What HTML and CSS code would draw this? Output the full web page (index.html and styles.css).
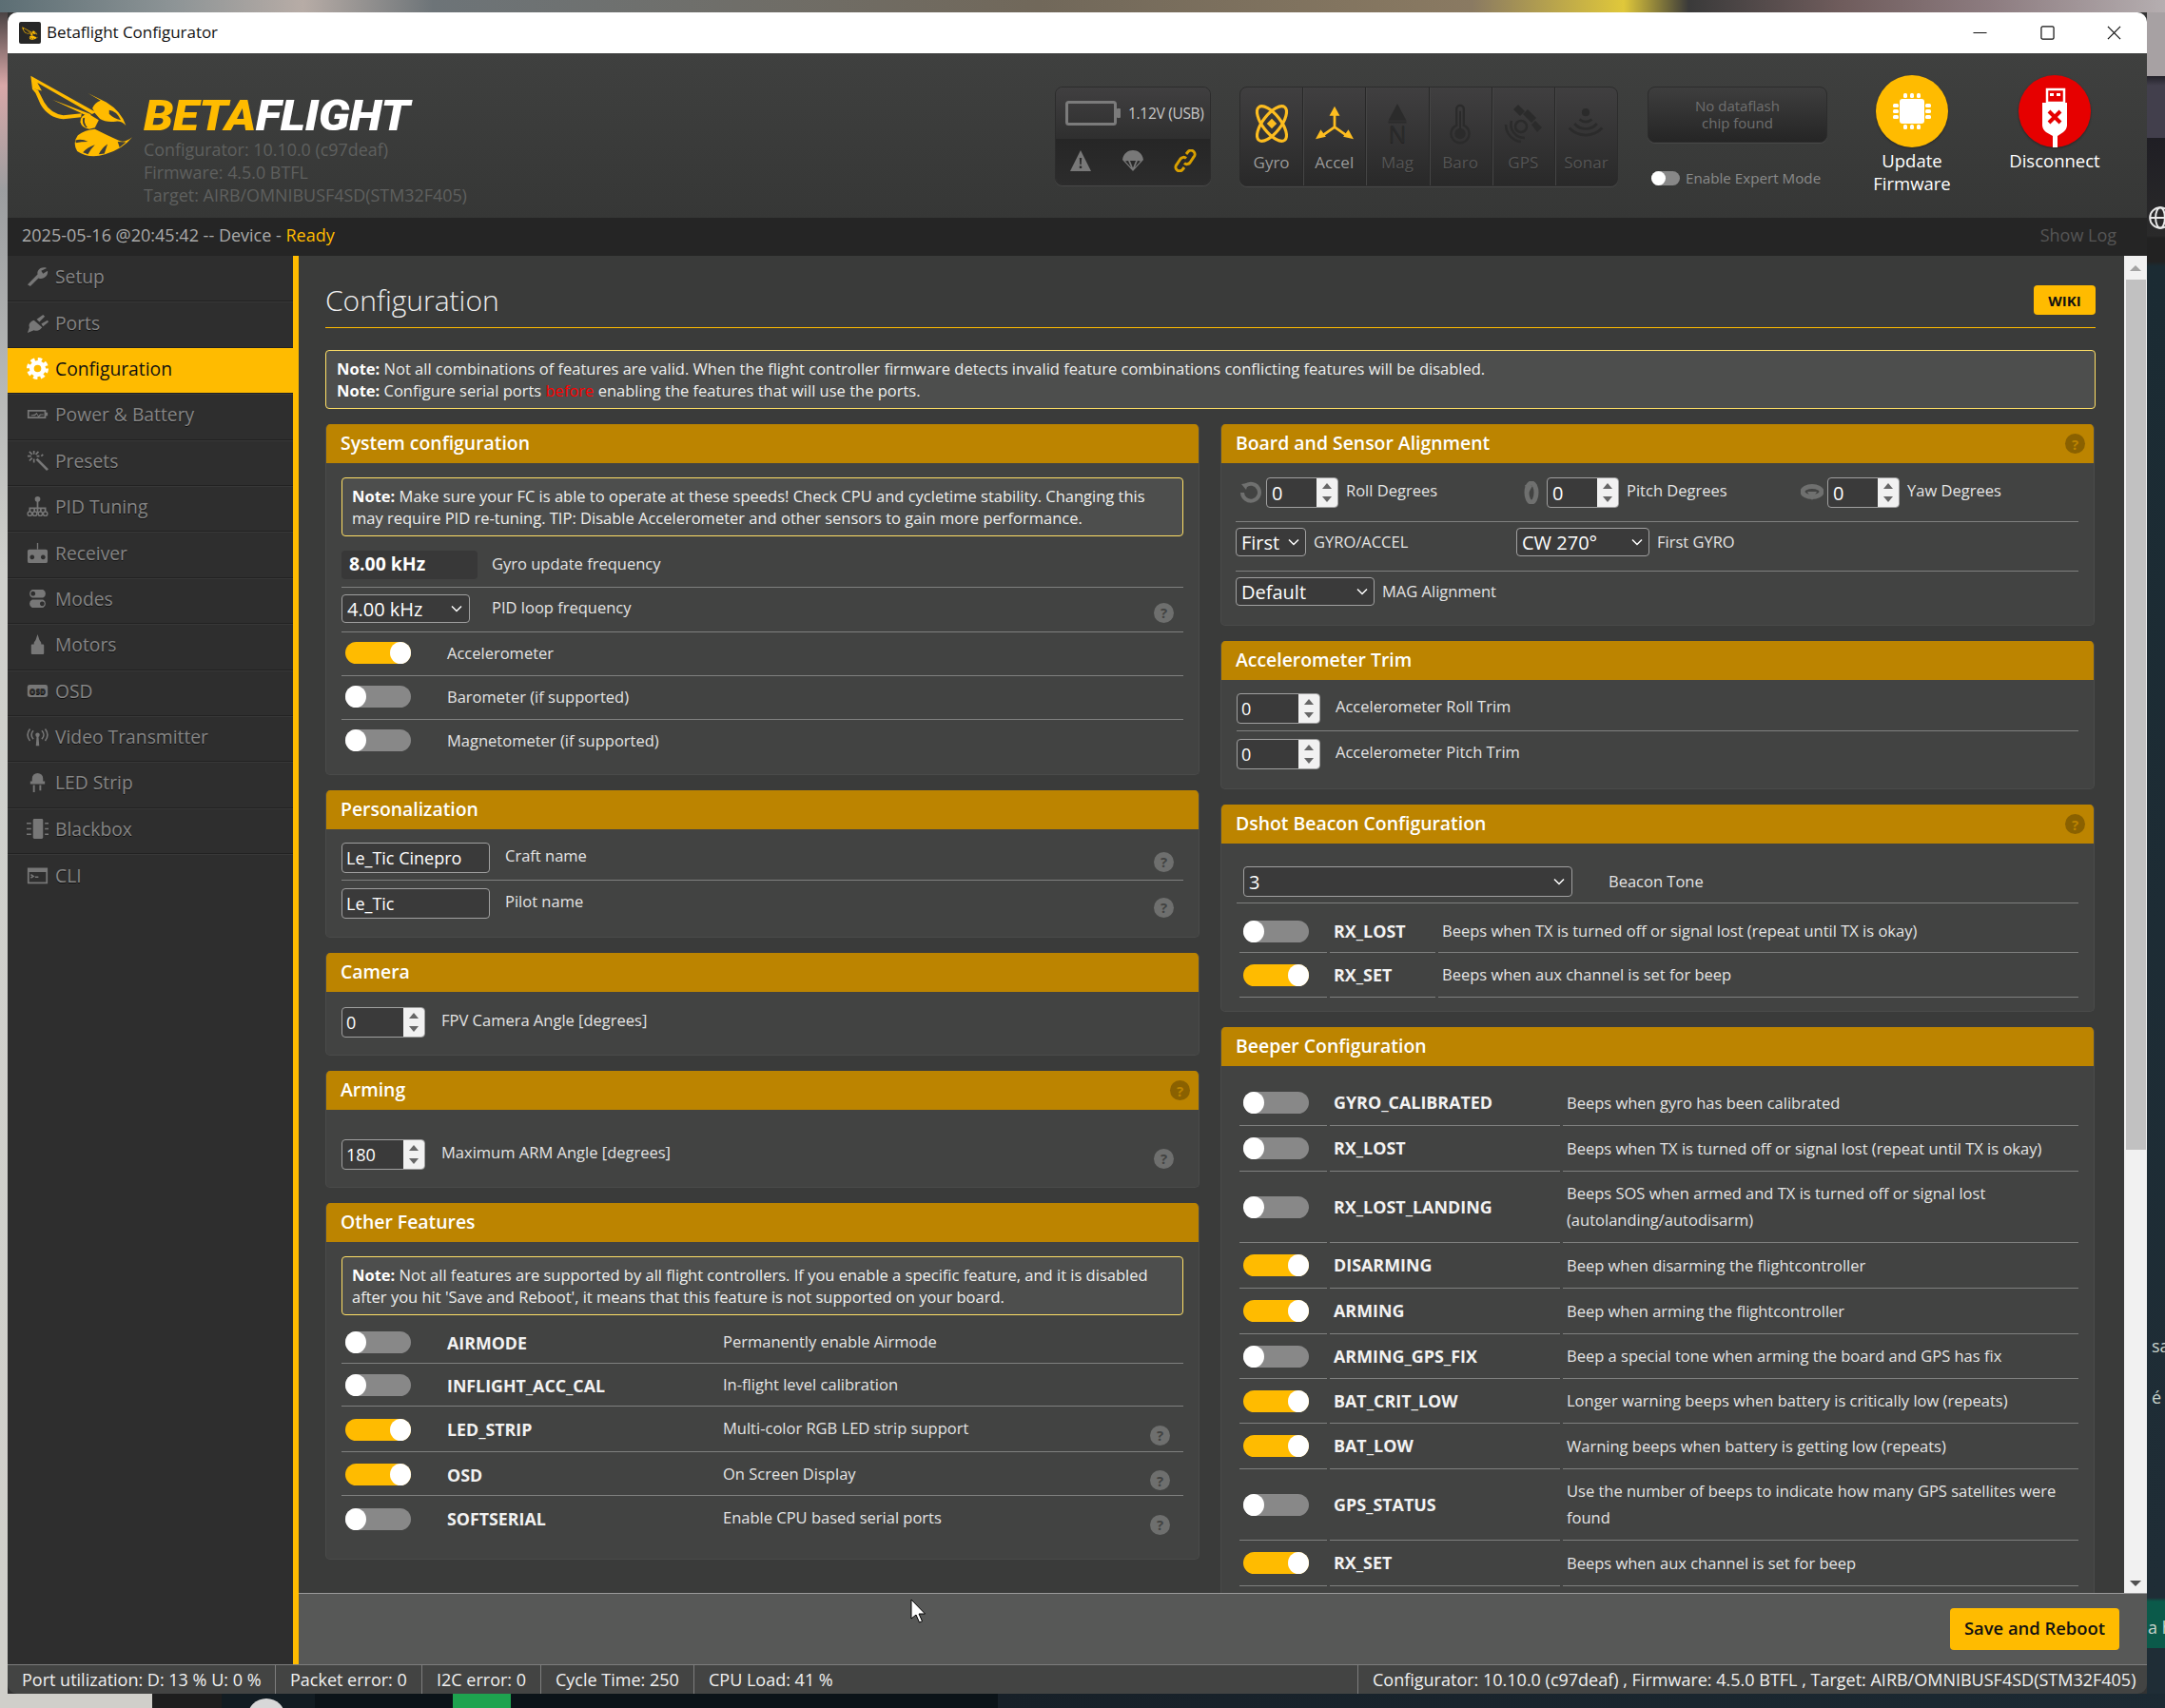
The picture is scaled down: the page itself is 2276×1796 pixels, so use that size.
FILE: index.html
```html
<!DOCTYPE html>
<html lang="en">
<head>
<meta charset="utf-8">
<title>Betaflight Configurator</title>
<link rel="stylesheet" href="styles.css">
</head>
<body>
<svg class="defs" width="0" height="0" aria-hidden="true">
  <symbol id="bee" viewBox="90 80 340 270">
    <path fill="#ffbb00" d="M97 88 L303 203 L291 209 L118 110 L132 135 L103 128 L120 133 L140 172 Q160 206 200 213 L258 207 L256 219 L200 225 Q152 220 128 178 L112 142 L102 130 Z"/>
    <path fill="#ffbb00" d="M165 163 L288 210 L278 216 Z"/>
    <path fill="#ffbb00" d="M278 143 L336 171 Q384 200 398 245 Q384 230 366 232 Q335 236 316 224 L300 206 L292 190 Q300 172 318 166 Z"/>
    <path fill="#3c3d3c" d="M345 196 Q368 198 382 228 Q358 222 345 208 Z"/>
    <path fill="#ffbb00" d="M280 208 Q252 212 254 234 Q258 254 282 256 L300 252 L312 228 Z"/>
    <path fill="#3c3d3c" d="M262 222 Q258 240 272 252 L276 250 Q264 238 268 220 Z"/>
    <path fill="#ffbb00" d="M300 256 Q268 258 246 276 Q228 300 244 326 Q282 352 332 336 Q388 320 418 282 Q392 302 374 292 Q340 276 300 256 Z"/>
    <path fill="#3c3d3c" d="M238 292 Q258 286 278 296 Q256 296 240 300 Z M262 330 Q276 314 300 306 Q286 320 278 336 Z M312 336 Q322 316 340 304 Q334 322 330 334 Z M372 296 L398 298 L378 314 Z"/>
  </symbol>
</svg>

<span class="bgtext bg-sa">sa</span>
<span class="bgtext bg-e">é</span>
<span class="bgtext bg-ah">a h</span>
<span class="bg-circle"></span>
<span class="bg-green"></span>
<svg class="globe" viewBox="0 0 24 24"><circle cx="12" cy="12" r="10"/><ellipse cx="12" cy="12" rx="4.5" ry="10"/><path d="M2 12h20"/></svg>

<div class="window">
  <div class="titlebar">
    <span class="appicon"><svg width="18" height="16"><use href="#bee"/></svg></span>
    <span class="apptitle">Betaflight Configurator</span>
    <div class="winbtns">
      <svg class="winbtn" viewBox="0 0 16 16"><path d="M0.5 8h15"/></svg>
      <svg class="winbtn" viewBox="0 0 16 16"><rect x="1" y="1" width="14" height="14" rx="1.5"/></svg>
      <svg class="winbtn" viewBox="0 0 16 16"><path d="M1 1l14 14M15 1L1 15"/></svg>
    </div>
  </div>

  <header class="header">
    <svg class="beelogo"><use href="#bee"/></svg>
    <div class="brand">
      <div class="wordmark"><span class="w-y">BETA</span><span class="w-w">FLIGHT</span></div>
      <div class="ver">Configurator: 10.10.0 (c97deaf)</div>
      <div class="ver">Firmware: 4.5.0 BTFL</div>
      <div class="ver">Target: AIRB/OMNIBUSF4SD(STM32F405)</div>
    </div>
    <div class="cluster">
      <div class="batbox">
        <div class="bat-top">
          <svg class="baticon" viewBox="0 0 58 26"><rect x="1.5" y="1.5" width="51" height="23" rx="2"/><rect class="nub" x="54" y="8" width="4" height="10" rx="1"/></svg>
          <span class="battxt">1.12V (USB)</span>
        </div>
        <div class="bat-bot">
          <svg class="staticon" viewBox="0 0 24 24"><path d="M12 1l11 22H1z"/><path class="cut" d="M10.8 9h2.4l-.5 7h-1.4zM10.8 17.5h2.4v2.4h-2.4z"/></svg>
          <svg class="staticon" viewBox="0 0 24 24"><path d="M1 11C2 4 7 1 12 1s10 3 11 10l-11 12zM4 12.500l6 6.500-3-7zM9 12l3 7.500 3-7.500zM17 12l-3 7 6-6.500z" fill-rule="evenodd"/></svg>
          <svg class="staticon link" viewBox="0 0 24 24"><path d="M13 5l2-2.500a4 4 0 0 1 6 5.500l-4 6a4 4 0 0 1-6 .5M11 19l-2 2.500a4 4 0 0 1-6-5.500l4-6a4 4 0 0 1 6-.5"/></svg>
        </div>
      </div>

      <div class="sensors">
        <div class="sensor lit">
          <svg class="sicon" viewBox="0 0 36 40"><g fill="none" stroke="#fdbd20" stroke-width="3"><ellipse cx="18" cy="20" rx="9" ry="21" transform="rotate(-38 18 20)"/><ellipse cx="18" cy="20" rx="9" ry="21" transform="rotate(38 18 20)"/></g><path fill="#fdbd20" d="M18 15l5 5-5 5-5-5z"/></svg>
          <span>Gyro</span>
        </div>
        <div class="sensor lit">
          <svg class="sicon" viewBox="0 0 44 40"><g fill="none" stroke="#fdbd20" stroke-width="3"><path d="M22 8v16M22 24L9 33M22 24l13 9"/></g><path fill="#fdbd20" d="M22 0l6 11H16zM0 38l6-11 6 8zM44 38l-6-11-6 8z"/></svg>
          <span>Accel</span>
        </div>
        <div class="sensor">
          <svg class="sicon" viewBox="0 0 36 40"><path class="dark" d="M18 0l9 17H9z"/><path class="darkline" d="M9 18.500h18"/><text class="ntext" x="18" y="39" text-anchor="middle">N</text></svg>
          <span>Mag</span>
        </div>
        <div class="sensor">
          <svg class="sicon" viewBox="0 0 36 44"><path class="therm" d="M14 24V6a4 4 0 0 1 8 0v18a10 10 0 1 1-8 0z"/><circle class="dark" cx="18" cy="33" r="6"/><path class="darkline" d="M18 8v20"/></svg>
          <span>Baro</span>
        </div>
        <div class="sensor">
          <svg class="sicon" viewBox="0 0 40 42"><path class="dark" d="M10 6l5-5 7 7-5 5zM20 11l5-5 9 9-5 5zM29 22l4-4 7 7-5 5z"/><circle class="therm" cx="18" cy="24" r="6"/><path class="therm" d="M8 18a14 14 0 0 0 14 18M2 22a18 18 0 0 0 16 18"/></svg>
          <span>GPS</span>
        </div>
        <div class="sensor">
          <svg class="sicon" viewBox="0 0 44 40"><circle class="dark" cx="22" cy="7" r="4.500"/><path class="thick" d="M15 15a10 10 0 0 0 14 0M9 20a17 17 0 0 0 26 0M3 25a26 26 0 0 0 38 0"/></svg>
          <span>Sonar</span>
        </div>
      </div>

      <div class="flashcol">
        <div class="flashbox">No dataflash<br>chip found</div>
        <div class="expert"><span class="mini"></span><span>Enable Expert Mode</span></div>
      </div>

      <div class="bigbtn">
        <svg class="circle" viewBox="0 0 76 76"><circle cx="38" cy="38" r="38" fill="#ffbb00"/><rect x="25" y="25" width="26" height="26" rx="3" fill="#fff"/><g fill="#fff"><rect x="29" y="19" width="4" height="5" rx="1.500"/><rect x="36" y="19" width="4" height="5" rx="1.500"/><rect x="43" y="19" width="4" height="5" rx="1.500"/><rect x="29" y="52" width="4" height="5" rx="1.500"/><rect x="36" y="52" width="4" height="5" rx="1.500"/><rect x="43" y="52" width="4" height="5" rx="1.500"/><rect x="18" y="30" width="6" height="4" rx="1.500"/><rect x="18" y="36" width="6" height="4" rx="1.500"/><rect x="18" y="42" width="6" height="4" rx="1.500"/><rect x="52" y="30" width="6" height="4" rx="1.500"/><rect x="52" y="36" width="6" height="4" rx="1.500"/><rect x="52" y="42" width="6" height="4" rx="1.500"/></g></svg>
        <span>Update<br>Firmware</span>
      </div>
      <div class="bigbtn second">
        <svg class="circle" viewBox="0 0 76 76"><circle cx="38" cy="38" r="38" fill="#e60000"/><rect x="30" y="15" width="18" height="14" fill="none" stroke="#fff" stroke-width="2.500"/><rect x="33" y="19" width="4" height="3" fill="#fff"/><rect x="40" y="19" width="4" height="3" fill="#fff"/><path fill="#fff" d="M25 29h26v24a10 10 0 0 1-4 7l-6 4v12h-5V64l-7-4a10 10 0 0 1-4-7z"/><path d="M32 38l12 12M44 38L32 50" stroke="#e60000" stroke-width="4"/></svg>
        <span>Disconnect</span>
      </div>
    </div>
  </header>

  <div class="logline">
    <div>2025-05-16 @20:45:42 -- Device - <span class="ready">Ready</span></div>
    <div class="showlog">Show Log</div>
  </div>

  <div class="main">
    <nav class="side">
      <a class="nav"><svg viewBox="0 0 24 24"><path d="M1 21L12 10C11 5 16 1 22 3l-6 3 2 3 5-3c1 6-5 10-10 8L4 23z"/></svg>Setup</a>
      <a class="nav"><svg viewBox="0 0 24 24"><path d="M1 23l2-6c-1-3 0-5 3-7l2-1 9 8-2 2c-3 2-5 2-7 1zM11 8l7-5 2 2-6 6zM16 13l7-4 1 2-6 5z"/></svg>Ports</a>
      <a class="nav active"><svg viewBox="0 0 24 24"><circle class="gr" cx="12" cy="12" r="6.500"/><circle class="gt" cx="12" cy="12" r="10"/></svg>Configuration</a>
      <a class="nav"><svg viewBox="0 0 26 24"><path d="M1 7h22v3h2v4h-2v3H1zM3 9v6h18V9z" fill-rule="evenodd"/><path d="M5 13l5-1 2-2 2 4 2-2h4v1h-3l-3 3-2-4-2 2H5z"/></svg>Power &amp; Battery</a>
      <a class="nav"><svg viewBox="0 0 24 24"><path d="M10 11l2-2 12 12-2 2z"/><path class="ln" d="M8 1v4M8 10v4M1 7h4M11 7h3M3 2l3 3M3 12l3-3M13 2l-3 3M18 5l-2 2"/></svg>Presets</a>
      <a class="nav"><svg viewBox="0 0 24 24"><circle cx="12" cy="4" r="3"/><path class="ln" d="M12 6v13M3.500 19v-5h17v5M8.500 14v5M15.500 14v5"/><circle class="hole" cx="3.500" cy="20" r="2.300"/><circle class="hole" cx="9" cy="20" r="2.300"/><circle class="hole" cx="15" cy="20" r="2.300"/><circle class="hole" cx="20.500" cy="20" r="2.300"/></svg>PID Tuning</a>
      <a class="nav"><svg viewBox="0 0 24 24"><path d="M11.300 1h1.400v7h-1.400z"/><path fill-rule="evenodd" d="M3 8h18a2 2 0 0 1 2 2v11a2 2 0 0 1-2 2H3a2 2 0 0 1-2-2V10a2 2 0 0 1 2-2zm3 6a2.500 2.500 0 1 0 .1 0zm12 0a2.500 2.500 0 1 0 .1 0z"/></svg>Receiver</a>
      <a class="nav"><svg viewBox="0 0 24 24"><path fill-rule="evenodd" d="M6 2h12a5 5 0 0 1 0 9H6a5 5 0 0 1 0-9zm1 2a2.500 2.500 0 1 0 .1 0zM6 13h12a5 5 0 0 1 0 9H6a5 5 0 0 1 0-9zm11 2a2.500 2.500 0 1 0 .1 0z"/></svg>Modes</a>
      <a class="nav"><svg viewBox="0 0 24 24"><path d="M12 1l2 6c1 2 2 2 2 4v1h2a1 1 0 0 1 1 1v9a1 1 0 0 1-1 1H6a1 1 0 0 1-1-1v-9a1 1 0 0 1 1-1h2v-1c0-2 1-2 2-4z"/></svg>Motors</a>
      <a class="nav"><svg class="wide" viewBox="0 0 28 18"><rect x="1" y="1" width="26" height="16" rx="3"/><text class="osdtxt" x="14" y="13" text-anchor="middle">OSD</text></svg>OSD</a>
      <a class="nav"><svg viewBox="0 0 26 24"><circle cx="13" cy="10" r="2.500"/><path d="M12 11h2l1 12h-4z"/><path class="ln" d="M8 5c-3 3-3 7 0 10M18 5c3 3 3 7 0 10M4 3c-4 5-4 9 0 14M22 3c4 5 4 9 0 14"/></svg>Video Transmitter</a>
      <a class="nav"><svg viewBox="0 0 24 24"><path d="M6 11V8a6 6 0 0 1 12 0v3h2v3H4v-3zM7 15h2v8H7zM14 15h2v6h-2z"/></svg>LED Strip</a>
      <a class="nav"><svg viewBox="0 0 24 24"><rect x="7" y="1" width="11" height="22" rx="1.500"/><path class="ln" d="M0 6h5M0 12h5M0 18h5M20 6h4M20 12h4M20 18h4"/></svg>Blackbox</a>
      <a class="nav"><svg class="wide" viewBox="0 0 26 22"><path fill-rule="evenodd" d="M1 2h24v19H1zm2 5v12h20V7z"/><path class="ln" d="M5 10l3 2-3 2M10 13h4"/></svg>CLI</a>
    </nav>

    <div class="content">
      <div class="scrollarea">
        <div class="scroller">
          <div class="titlewrap">
            <h1>Configuration</h1>
            <a class="wiki">WIKI</a>
          </div>
          <div class="note topnote"><b>Note:</b> Not all combinations of features are valid. When the flight controller firmware detects invalid feature combinations conflicting features will be disabled.<br><b>Note:</b> Configure serial ports <span class="red">before</span> enabling the features that will use the ports.</div>

          <div class="cols">
            <div class="col">
              <section class="panel">
                <div class="phead">System configuration</div>
                <div class="pbody body-sys">
                  <div class="note pnote"><b>Note:</b> Make sure your FC is able to operate at these speeds! Check CPU and cycletime stability. Changing this may require PID re-tuning. TIP: Disable Accelerometer and other sensors to gain more performance.</div>
                  <div class="row r-gyro"><div class="readout">8.00 kHz</div><span class="label lab-up">Gyro update frequency</span></div>
                  <div class="row r-pid">
                    <div class="selwrap sw-pid"><select class="sel"><option>4.00 kHz</option></select><svg class="chev" viewBox="0 0 12 8"><path d="M1 1.500l5 5 5-5"/></svg></div>
                    <span class="label lab-up">PID loop frequency</span><span class="help helplow">?</span>
                  </div>
                  <div class="row r-tog"><span class="toggle on"></span><span class="label lab-tog">Accelerometer</span></div>
                  <div class="row r-tog"><span class="toggle"></span><span class="label lab-tog">Barometer (if supported)</span></div>
                  <div class="row r-tog last"><span class="toggle"></span><span class="label lab-tog">Magnetometer (if supported)</span></div>
                </div>
              </section>

              <section class="panel">
                <div class="phead">Personalization</div>
                <div class="pbody body-pers">
                  <div class="row r-inp"><input class="text" value="Le_Tic Cinepro" readonly><span class="label lab-name">Craft name</span><span class="help helplow">?</span></div>
                  <div class="row r-inp last"><input class="text" value="Le_Tic" readonly><span class="label lab-name">Pilot name</span><span class="help helplow">?</span></div>
                </div>
              </section>

              <section class="panel">
                <div class="phead">Camera</div>
                <div class="pbody body-cam">
                  <div class="row last"><div class="num"><input value="0" readonly><span class="spin"><i></i><i class="dn"></i></span></div><span class="label lab-num">FPV Camera Angle [degrees]</span></div>
                </div>
              </section>

              <section class="panel">
                <div class="phead">Arming<span class="help hhelp">?</span></div>
                <div class="pbody body-arm">
                  <div class="row last"><div class="num"><input value="180" readonly><span class="spin"><i></i><i class="dn"></i></span></div><span class="label lab-num">Maximum ARM Angle [degrees]</span><span class="help helplow">?</span></div>
                </div>
              </section>

              <section class="panel">
                <div class="phead">Other Features</div>
                <div class="pbody body-other">
                  <div class="note pnote"><b>Note:</b> Not all features are supported by all flight controllers. If you enable a specific feature, and it is disabled after you hit 'Save and Reboot', it means that this feature is not supported on your board.</div>
                  <div class="row f1"><span class="toggle"></span><b class="fname">AIRMODE</b><span class="fdesc">Permanently enable Airmode</span></div>
                  <div class="row f2"><span class="toggle"></span><b class="fname">INFLIGHT_ACC_CAL</b><span class="fdesc">In-flight level calibration</span></div>
                  <div class="row f3"><span class="toggle on"></span><b class="fname">LED_STRIP</b><span class="fdesc">Multi-color RGB LED strip support</span><span class="help helpf">?</span></div>
                  <div class="row f4"><span class="toggle on"></span><b class="fname">OSD</b><span class="fdesc">On Screen Display</span><span class="help helpf">?</span></div>
                  <div class="row f5 last"><span class="toggle"></span><b class="fname">SOFTSERIAL</b><span class="fdesc">Enable CPU based serial ports</span><span class="help helpf">?</span></div>
                </div>
              </section>
            </div>

            <div class="col">
              <section class="panel">
                <div class="phead">Board and Sensor Alignment<span class="help hhelp">?</span></div>
                <div class="pbody body-board">
                  <div class="trio t-deg">
                    <div class="cell">
                      <svg class="axis" viewBox="0 0 24 24"><path class="arc" d="M6 5a9 9 0 1 1-3 7"/><path class="arrow" d="M2 3l7-1-2 7z"/></svg>
                      <div class="num numb"><input value="0" readonly><span class="spin"><i></i><i class="dn"></i></span></div><span class="label">Roll Degrees</span>
                    </div>
                    <div class="cell">
                      <svg class="axis" viewBox="0 0 24 24"><ellipse class="arc arc-p" cx="12" cy="12" rx="5" ry="10"/><path class="arrow" d="M5 4l8 1-5 9z"/></svg>
                      <div class="num numb"><input value="0" readonly><span class="spin"><i></i><i class="dn"></i></span></div><span class="label">Pitch Degrees</span>
                    </div>
                    <div class="cell">
                      <svg class="axis" viewBox="0 0 24 24"><ellipse class="arc arc-p" cx="12" cy="11" rx="10" ry="5.500"/><path class="arrow" d="M7 11h10l-5 9z"/></svg>
                      <div class="num numb"><input value="0" readonly><span class="spin"><i></i><i class="dn"></i></span></div><span class="label">Yaw Degrees</span>
                    </div>
                  </div>
                  <div class="trio t-sel">
                    <div class="cell">
                      <div class="selwrap sw-first"><select class="sel"><option>First</option></select><svg class="chev" viewBox="0 0 12 8"><path d="M1 1.500l5 5 5-5"/></svg></div>
                      <span class="label">GYRO/ACCEL</span>
                    </div>
                    <div class="cell">
                      <div class="selwrap sw-cw"><select class="sel"><option>CW 270°</option></select><svg class="chev" viewBox="0 0 12 8"><path d="M1 1.500l5 5 5-5"/></svg></div>
                      <span class="label">First GYRO</span>
                    </div>
                  </div>
                  <div class="trio t-mag last">
                    <div class="cell">
                      <div class="selwrap sw-def"><select class="sel"><option>Default</option></select><svg class="chev" viewBox="0 0 12 8"><path d="M1 1.500l5 5 5-5"/></svg></div>
                      <span class="label">MAG Alignment</span>
                    </div>
                  </div>
                </div>
              </section>

              <section class="panel">
                <div class="phead">Accelerometer Trim</div>
                <div class="pbody body-trim">
                  <div class="row r-inp"><div class="num"><input value="0" readonly><span class="spin"><i></i><i class="dn"></i></span></div><span class="label lab-trim">Accelerometer Roll Trim</span></div>
                  <div class="row r-inp last"><div class="num"><input value="0" readonly><span class="spin"><i></i><i class="dn"></i></span></div><span class="label lab-trim">Accelerometer Pitch Trim</span></div>
                </div>
              </section>

              <section class="panel">
                <div class="phead">Dshot Beacon Configuration<span class="help hhelp">?</span></div>
                <div class="pbody body-dshot">
                  <div class="row r-beacon">
                    <div class="selwrap sw-beacon"><select class="sel"><option>3</option></select><svg class="chev" viewBox="0 0 12 8"><path d="M1 1.500l5 5 5-5"/></svg></div>
                    <span class="label lab-beacon">Beacon Tone</span>
                  </div>
                  <table class="tbl dtbl">
                    <tr class="dr1"><td class="tc"><span class="toggle"></span></td><td class="nc"><b>RX_LOST</b></td><td>Beeps when TX is turned off or signal lost (repeat until TX is okay)</td></tr>
                    <tr class="dr2"><td class="tc"><span class="toggle on"></span></td><td class="nc"><b>RX_SET</b></td><td>Beeps when aux channel is set for beep</td></tr>
                  </table>
                </div>
              </section>

              <section class="panel">
                <div class="phead">Beeper Configuration</div>
                <div class="pbody body-beep">
                  <table class="tbl btbl">
                    <tr class="h48"><td class="tc"><span class="toggle"></span></td><td class="nc"><b>GYRO_CALIBRATED</b></td><td>Beeps when gyro has been calibrated</td></tr>
                    <tr class="h48"><td class="tc"><span class="toggle"></span></td><td class="nc"><b>RX_LOST</b></td><td>Beeps when TX is turned off or signal lost (repeat until TX is okay)</td></tr>
                    <tr class="h75"><td class="tc"><span class="toggle"></span></td><td class="nc"><b>RX_LOST_LANDING</b></td><td>Beeps SOS when armed and TX is turned off or signal lost (autolanding/autodisarm)</td></tr>
                    <tr class="h48"><td class="tc"><span class="toggle on"></span></td><td class="nc"><b>DISARMING</b></td><td>Beep when disarming the flightcontroller</td></tr>
                    <tr class="h48"><td class="tc"><span class="toggle on"></span></td><td class="nc"><b>ARMING</b></td><td>Beep when arming the flightcontroller</td></tr>
                    <tr class="h47"><td class="tc"><span class="toggle"></span></td><td class="nc"><b>ARMING_GPS_FIX</b></td><td>Beep a special tone when arming the board and GPS has fix</td></tr>
                    <tr class="h47"><td class="tc"><span class="toggle on"></span></td><td class="nc"><b>BAT_CRIT_LOW</b></td><td>Longer warning beeps when battery is critically low (repeats)</td></tr>
                    <tr class="h48"><td class="tc"><span class="toggle on"></span></td><td class="nc"><b>BAT_LOW</b></td><td>Warning beeps when battery is getting low (repeats)</td></tr>
                    <tr class="h75"><td class="tc"><span class="toggle"></span></td><td class="nc"><b>GPS_STATUS</b></td><td>Use the number of beeps to indicate how many GPS satellites were found</td></tr>
                    <tr class="h48"><td class="tc"><span class="toggle on"></span></td><td class="nc"><b>RX_SET</b></td><td>Beeps when aux channel is set for beep</td></tr>
                  </table>
                </div>
              </section>
            </div>
          </div>
        </div>
        <div class="scrollbar">
          <span class="sb-up"></span>
          <span class="sb-thumb"></span>
          <span class="sb-dn"></span>
        </div>
      </div>
      <div class="footer"><a class="save">Save and Reboot</a></div>
    </div>
  </div>

  <div class="statusbar">
    <span class="st st1">Port utilization: D: 13 % U: 0 %</span>
    <span class="st st2">Packet error: 0</span>
    <span class="st st3">I2C error: 0</span>
    <span class="st st4">Cycle Time: 250</span>
    <span class="st st5">CPU Load: 41 %</span>
    <span class="st st6">Configurator: 10.10.0 (c97deaf) , Firmware: 4.5.0 BTFL , Target: AIRB/OMNIBUSF4SD(STM32F405)</span>
  </div>
</div>

<svg class="cursor" viewBox="0 0 18 26"><path d="M1 1v20l5-4 3.500 8 3-1.300L9 16h6.500z" fill="#fff" stroke="#000"/></svg>
</body>
</html>
```

FILE: styles.css
```css
* { box-sizing: border-box; }
html, body { margin: 0; height: 100%; }
body {
  width: 2276px;
  height: 1796px;
  overflow: hidden;
  position: relative;
  font-family: "Open Sans", sans-serif;
  font-size: 16.500px;
  color: #e4e4e4;
  background:
    linear-gradient(90deg, #5c6e74 0, #8d9496 8%, #b7aca6 14%, #6d7478 20%, #71685a 48%, #8a7a62 68%, #e0c83a 75%, #3a3a3a 78%, #6f5c5c 85%, #8d7c80 92%, #b5aeb0 100%) top / 100% 13px no-repeat,
    linear-gradient(90deg, #d0cfca 0, #d0cfca 160px, #1e1e1e 160px, #1e1e1e 233px, #121c22 233px, #121c22 331px, #0b1318 331px, #0b1318 1049px, #172028 1049px, #1c2a33 100%) bottom / 100% 15px no-repeat,
    linear-gradient(180deg, #a7a1a3 0, #a7a1a3 80px, #222129 80px, #423f4c 90px, #423f4c 145px, #1f1e24 145px, #2a2a2a 248px, #222 250px, #222 275px, #1b2b33 280px, #1f2d36 1680px, #0b5a4a 1684px, #0b5a4a 1733px, #1f2d36 1733px) right / 19px 100% no-repeat,
    linear-gradient(180deg, #333 0, #d9a8a8 90px, #9c9ea0 200px, #cfd0cc 600px, #d0cfca 100%) left / 8px 100% no-repeat,
    #333;
}
.defs { position: absolute; }
.bgtext { position: absolute; left: 2262px; font-size: 18px; color: #c9d3cc; line-height: 20px; white-space: nowrap; }
.bg-sa { top: 1405px; }
.bg-e { top: 1459px; }
.bg-ah { top: 1701px; left: 2258px; }
.bg-circle { position: absolute; left: 260px; top: 1786px; width: 40px; height: 40px; border-radius: 50%; background: #d8d8d8; }
.bg-green { position: absolute; left: 476px; top: 1781px; width: 61px; height: 15px; background: #1ea34f; }
.globe { position: absolute; left: 2258px; top: 216px; width: 26px; height: 26px; fill: none; stroke: #e9e9e9; stroke-width: 1.800; }
.cursor { position: absolute; left: 957px; top: 1681px; width: 18px; height: 26px; }

.window {
  position: absolute;
  left: 8px;
  top: 13px;
  width: 2249px;
  height: 1768px;
  display: flex;
  flex-direction: column;
  border-radius: 10px;
  overflow: hidden;
  background: #3a3b3a;
}

/* title bar */
.titlebar { height: 43px; flex: none; background: #fff; display: flex; align-items: center; padding-left: 12px; color: #111; }
.appicon { width: 23px; height: 23px; background: #272727; border-radius: 2px; display: flex; align-items: center; justify-content: center; }
.apptitle { margin: 0 0 2px 6px; font-size: 17px; letter-spacing: -0.05px; }
.winbtns { margin-left: auto; display: flex; gap: 55.500px; padding-right: 27px; }
.winbtn { width: 15px; height: 15px; fill: none; stroke: #111; stroke-width: 1.300; }

/* header */
.header { height: 173px; flex: none; display: flex; align-items: flex-start; background: linear-gradient(#3f403f, #363736); position: relative; }
.beelogo { width: 113px; height: 90px; margin: 21px 0 0 22px; flex: none; }
.brand { margin: 43px 0 0 8px; }
.wordmark { font-family: Roboto, "Liberation Sans", sans-serif; font-weight: 900; font-style: italic; font-size: 44px; line-height: 46px; letter-spacing: -0.5px; height: 46px; width: 246px; transform: scaleX(1.14); transform-origin: left center; white-space: nowrap; }
.w-y { color: #ffbb00; }
.w-w { color: #fff; }
.ver { font-size: 17.900px; line-height: 24px; color: #5f605f; white-space: nowrap; }
.cluster { margin-left: auto; display: flex; align-items: flex-start; padding: 35px 47px 0 0; }

.batbox { width: 164px; height: 104px; border-radius: 8px; overflow: hidden; border: 1px solid #2c2c2c; box-shadow: 0 1px 0 #484848; }
.bat-top { height: 54px; display: flex; align-items: center; padding-left: 10px; gap: 8px; background: linear-gradient(#403f40, #2f2f2f); }
.baticon { width: 58px; height: 26px; fill: none; stroke: #7b7b7b; stroke-width: 3; }
.baticon .nub { fill: #7b7b7b; stroke: none; }
.battxt { font-size: 15.500px; color: #c8c8c8; white-space: nowrap; letter-spacing: -0.3px; }
.bat-bot { height: 48px; display: flex; align-items: center; justify-content: space-between; padding: 0 14px 2px; background: linear-gradient(#262626, #2c2c2c); }
.staticon { width: 24px; height: 24px; fill: #787878; }
.staticon .cut { fill: #2a2a2a; }
.staticon.link { fill: none; stroke: #d9a000; stroke-width: 3; }

.sensors { margin-left: 30px; width: 398px; height: 105px; display: flex; border-radius: 8px; overflow: hidden; background: linear-gradient(#403f40, #292929); border: 1px solid #2c2c2c; box-shadow: 0 1px 0 #484848; }
.sensor { flex: 1; display: flex; flex-direction: column; align-items: center; border-left: 1px solid #282828; box-shadow: inset 1px 0 0 #454545; font-size: 17px; color: #555; text-shadow: 0 1px 0 #222; }
.sensor:first-child { border-left: 0; box-shadow: none; }
.sensor.lit { color: #9c9c9c; }
.sicon { width: 40px; height: 42px; margin-top: 17px; flex: none; overflow: visible; }
.sensor span { margin-top: 9px; line-height: 22px; }
.dark { fill: #2b2b2b; }
.darkline { stroke: #2b2b2b; stroke-width: 2; fill: none; }
.therm { fill: none; stroke: #2b2b2b; stroke-width: 2.500; }
.thick { fill: none; stroke: #2b2b2b; stroke-width: 3; }
.ntext { font-family: "Open Sans", sans-serif; font-size: 24px; fill: #2b2b2b; }

.flashcol { margin-left: 31px; width: 189px; }
.flashbox { height: 59px; border-radius: 8px; background: linear-gradient(#3e3e3e, #252525); border: 1px solid #2c2c2c; box-shadow: 0 1px 0 #484848; font-size: 15px; line-height: 18px; color: #6f6f6f; text-align: center; padding-top: 10px; }
.expert { display: flex; align-items: center; margin: 27px 0 0 4px; font-size: 15.200px; color: #8a8a8a; white-space: nowrap; }
.mini { width: 30px; height: 15px; border-radius: 8px; background: #888; margin-right: 6px; position: relative; flex: none; }
.mini::before { content: ""; position: absolute; left: 0; top: 0; width: 15px; height: 15px; border-radius: 50%; background: #fff; }

.bigbtn { width: 100px; margin: -12px 0 0 39px; display: flex; flex-direction: column; align-items: center; color: #fff; font-size: 18.500px; line-height: 24px; text-align: center; }
.bigbtn.second { margin-left: 50px; }
.circle { width: 76px; height: 76px; filter: drop-shadow(0 1px 1px rgba(0,0,0,.35)); margin-bottom: 2px; }

/* log */
.logline { height: 40px; flex: none; background: #252525; display: flex; justify-content: space-between; align-items: center; padding: 0 32px 5px 15px; font-size: 18px; color: #aaa; }
.ready { color: #ffbb00; }
.showlog { color: #555; }

/* main */
.main { flex: 1; display: flex; min-height: 0; }
.side { width: 306px; flex: none; background: #2e2e2e; border-right: 6px solid #ffbb00; }
.nav { display: flex; align-items: center; height: 48.400px; padding: 0 0 4px 20px; border-bottom: 1px solid #222; box-shadow: inset 0 1px 0 #383838; color: #858585; font-size: 19.300px; text-shadow: 0 1px 0 #111; }
.nav:first-child { box-shadow: none; }
.nav:last-child { border-bottom: 0; }
.nav svg { width: 23px; height: 23px; margin-right: 7px; fill: #777; flex: none; }
.nav .ln { fill: none; stroke: #777; stroke-width: 1.800; }
.nav .hole { fill: #2e2e2e; stroke: #777; stroke-width: 1.500; }
.nav .osdtxt { font-size: 10px; font-weight: 800; fill: #2e2e2e; font-family: "Open Sans", sans-serif; }
.nav.active { background: #ffbb00; color: #111; text-shadow: none; box-shadow: none; border-bottom-color: #222; padding-bottom: 3px; }
.nav.active svg { fill: none; }
.nav .gr { fill: none; stroke: #fff; stroke-width: 5; }
.nav .gt { fill: none; stroke: #fff; stroke-width: 4; stroke-dasharray: 4.500 3.354; }

.content { flex: 1; min-width: 0; display: flex; flex-direction: column; }
.scrollarea { flex: 1; min-height: 0; display: flex; }
.scroller { flex: 1; min-width: 0; overflow: hidden; padding-left: 28px; background: #3a3b3a; }
.titlewrap { height: 76px; margin-right: 30px; border-bottom: 1px solid #ffbb00; display: flex; justify-content: space-between; align-items: flex-start; }
h1 { margin: 26px 0 0; font-size: 30px; line-height: 42px; font-weight: 300; color: #eee; }
.wiki { margin-top: 31px; width: 65px; height: 31px; background: #ffbb00; border-radius: 4px; color: #111; font-weight: 700; font-size: 15px; display: flex; align-items: center; justify-content: center; }
.note { border: 1px solid #ffe066; border-radius: 4px; background: #4d4e4d; color: #eee; }
.note b { color: #fff; font-weight: 700; }
.topnote { margin: 23px 30px 0 0; height: 62px; padding: 7px 11px; line-height: 23px; }
.red { color: #f00; }
.cols { display: grid; grid-template-columns: 919px 919px; column-gap: 22px; margin-top: 16px; }
.panel { background: #424342; border: 1px solid #4a4b4a; border-top: 0; border-radius: 5px; margin-bottom: 16px; overflow: hidden; }
.phead { height: 41px; margin: 0 -1px; background: #bc8400; color: #fff; font-weight: 600; font-size: 19.400px; padding: 0 16px 3px; display: flex; align-items: center; justify-content: space-between; }
.pbody { padding: 0 16px; }
.pnote { padding: 8px 10px; line-height: 22.500px; height: 62px; }
.row { display: flex; align-items: center; border-bottom: 1px solid #7f807f; }
.row.last { border-bottom: 0; }
.label { white-space: nowrap; }
.lab-up { margin-top: -3px; }
.help { width: 21px; height: 21px; border-radius: 50%; background: #6e6f6e; color: #424342; font-size: 15px; font-weight: 700; display: flex; align-items: center; justify-content: center; flex: none; }
.helplow { margin: 4px 10px -4px auto; }
.helpf { margin: 6px 14px -6px auto; }
.hhelp { background: #8a6100; color: #bc8400; margin: 3px -6px 0 0; }

/* system */
.pbody.body-sys { height: 327px; padding-top: 15px; }
.r-gyro { height: 54px; padding-top: 7px; }
.readout { width: 143px; height: 30px; background: #383838; border-radius: 4px; font-weight: 700; font-size: 19.400px; padding-left: 8px; line-height: 28px; color: #fff; margin-right: 15px; flex: none; }
.r-pid { height: 47px; padding-bottom: 2px; }
.selwrap { position: relative; flex: none; }
.sel { appearance: none; -webkit-appearance: none; width: 100%; height: 100%; background: #3a3a3a; border: 1px solid #a0a0a0; border-radius: 4px; color: #fff; font: 20px "Open Sans", sans-serif; padding: 0 0 0 5px; display: block; }
.chev { position: absolute; right: 8px; top: 50%; width: 12px; height: 8px; margin-top: -4px; fill: none; stroke: #fff; stroke-width: 1.500; }
.sw-pid { width: 135px; height: 30px; margin-right: 23px; }
.r-tog { height: 46px; padding-bottom: 3px; }
.toggle { flex: none; display: block; position: relative; width: 69px; height: 23px; border-radius: 12px; background: #888; margin-left: 4px; }
.toggle::before { content: ""; position: absolute; left: 0; top: 0; width: 22px; height: 23px; border-radius: 50%; background: #fff; }
.toggle.on { background: #ffbb00; }
.toggle.on::before { left: auto; right: 0; }
.lab-tog { margin-left: 38px; }

/* personalization */
.pbody.body-pers { padding-top: 6px; height: 113px; }
.r-inp { padding: 8px 0 7px; }
.text { width: 156px; height: 32px; background: #3a3a3a; border: 1px solid #a0a0a0; border-radius: 4px; color: #fff; font: 18px "Open Sans", sans-serif; padding: 0 0 0 4px; flex: none; }
.lab-name { margin: -6px 0 0 16px; }

/* camera / arming */
.pbody.body-cam { padding-top: 16px; height: 66px; }
.pbody.body-arm { padding-top: 31px; height: 81px; }
.num { flex: none; display: flex; width: 88px; height: 32px; border: 1px solid #a0a0a0; border-radius: 4px; overflow: hidden; background: #3a3a3a; }
.num input { flex: 1; min-width: 0; background: transparent; border: 0; color: #fff; font: 18px "Open Sans", sans-serif; padding: 0 0 0 4px; }
.spin { width: 22px; flex: none; background: #f1f1f1; display: flex; flex-direction: column; align-items: center; justify-content: center; gap: 8px; }
.spin i { display: block; width: 0; height: 0; border: 5px solid transparent; border-top: 0; border-bottom: 6px solid #666; }
.spin i.dn { border-bottom: 0; border-top: 6px solid #666; }
.lab-num { margin: -5px 0 0 17px; }

/* other features */
.pbody.body-other { height: 333px; padding-top: 15px; }
.fname { width: 290px; margin-left: 38px; font-weight: 700; font-size: 17.800px; color: #f2f2f2; flex: none; white-space: nowrap; }
.fdesc { white-space: nowrap; margin-top: -3px; }
.f1 { height: 51px; padding-top: 7px; }
.f2 { height: 45px; padding-top: 1px; }
.f3 { height: 48px; padding-top: 1px; }
.f4 { height: 46px; padding-top: 2px; }
.f5 { height: 46px; padding-top: 2px; }

/* board */
.pbody.body-board { padding-top: 15px; height: 170px; }
.trio { display: grid; grid-template-columns: repeat(3, 295px); border-bottom: 1px solid #7f807f; margin-left: -1px; }
.trio.last { border-bottom: 0; }
.t-deg { height: 47px; }
.t-sel { height: 52px; padding-top: 6px; }
.t-mag { padding-top: 6px; }
.cell { display: flex; align-items: flex-start; height: 32px; }
.axis { width: 24px; height: 24px; margin: 4px 4px 0 4px; flex: none; }
.arc { fill: none; stroke: #6f706f; stroke-width: 4; }
.arc-p { stroke-width: 5; }
.arrow { fill: #6f706f; }
.numb { width: 76px; }
.numb input { font-size: 20px; padding-left: 5px; }
.cell .label { margin: 3px 0 0 8px; }
.t-deg .cell .label { margin-top: 2px; }
.sw-first { width: 74px; height: 30px; }
.sw-cw { width: 140px; height: 30px; }
.sw-def { width: 146px; height: 30px; }
.trio .chev { right: 7px; }

/* trim */
.pbody.body-trim { padding-top: 6px; height: 114px; }
.lab-trim { margin: -6px 0 0 16px; }

/* dshot */
.pbody.body-dshot { height: 176px; }
.r-beacon { height: 63px; padding-top: 18px; }
.sw-beacon { width: 346px; height: 32px; margin-left: 7px; }
.lab-beacon { margin: -1px 0 0 38px; }

.tbl { border-collapse: separate; border-spacing: 3px 0; margin: 0; width: 888px; table-layout: fixed; line-height: 28px; }
.tbl td { border-bottom: 1px solid #7f807f; padding: 0 0 0 4px; vertical-align: middle; }
.tbl b { font-weight: 700; font-size: 17.900px; color: #f2f2f2; }
.tc { width: 92px; }
.tbl .toggle { margin-left: 0; }
.dtbl td.nc { width: 111px; }
.btbl td.nc { width: 242px; }
.dtbl .dr1 td { height: 52px; padding-top: 7px; }
.dtbl .dr2 td { height: 47px; }
.pbody.body-beep { padding-top: 15px; height: 600px; }
.h48 td { height: 48px; }
.h47 td { height: 47px; }
.h75 td { height: 75px; }

/* scrollbar */
.scrollbar { width: 24px; flex: none; background: #f1f1f1; display: flex; flex-direction: column; align-items: flex-end; position: relative; }
.sb-up { width: 0; height: 0; margin: 10px 6px 0 0; border: 6px solid transparent; border-top: 0; border-bottom: 6px solid #a3a3a3; }
.sb-thumb { width: 21px; height: 915px; margin: 9px 1px 0 0; background: #c1c1c1; }
.sb-dn { width: 0; height: 0; margin: auto 6px 7px 0; border: 6px solid transparent; border-bottom: 0; border-top: 6px solid #505050; }

/* footer */
.footer { height: 75px; flex: none; background: #575857; border-top: 1px solid #9a9a9a; display: flex; justify-content: flex-end; align-items: center; padding-right: 29px; }
.save { width: 178px; height: 44px; padding-bottom: 3px; background: #ffbb00; border-radius: 4px; color: #111; font-weight: 600; font-size: 18.400px; display: flex; align-items: center; justify-content: center; }

/* status */
.statusbar { height: 31px; flex: none; background: #434443; border-top: 1px solid #7d7d7d; display: flex; align-items: stretch; font-size: 18px; color: #f0f0f0; white-space: nowrap; }
.st { display: flex; align-items: center; padding: 0 0 1px 15px; border-right: 1px solid #7d7d7d; }
.st1 { width: 282px; }
.st2 { width: 154px; }
.st3 { width: 125px; }
.st4 { width: 161px; }
.st5 { width: 698px; }
.st6 { flex: 1; border-right: 0; }
```
